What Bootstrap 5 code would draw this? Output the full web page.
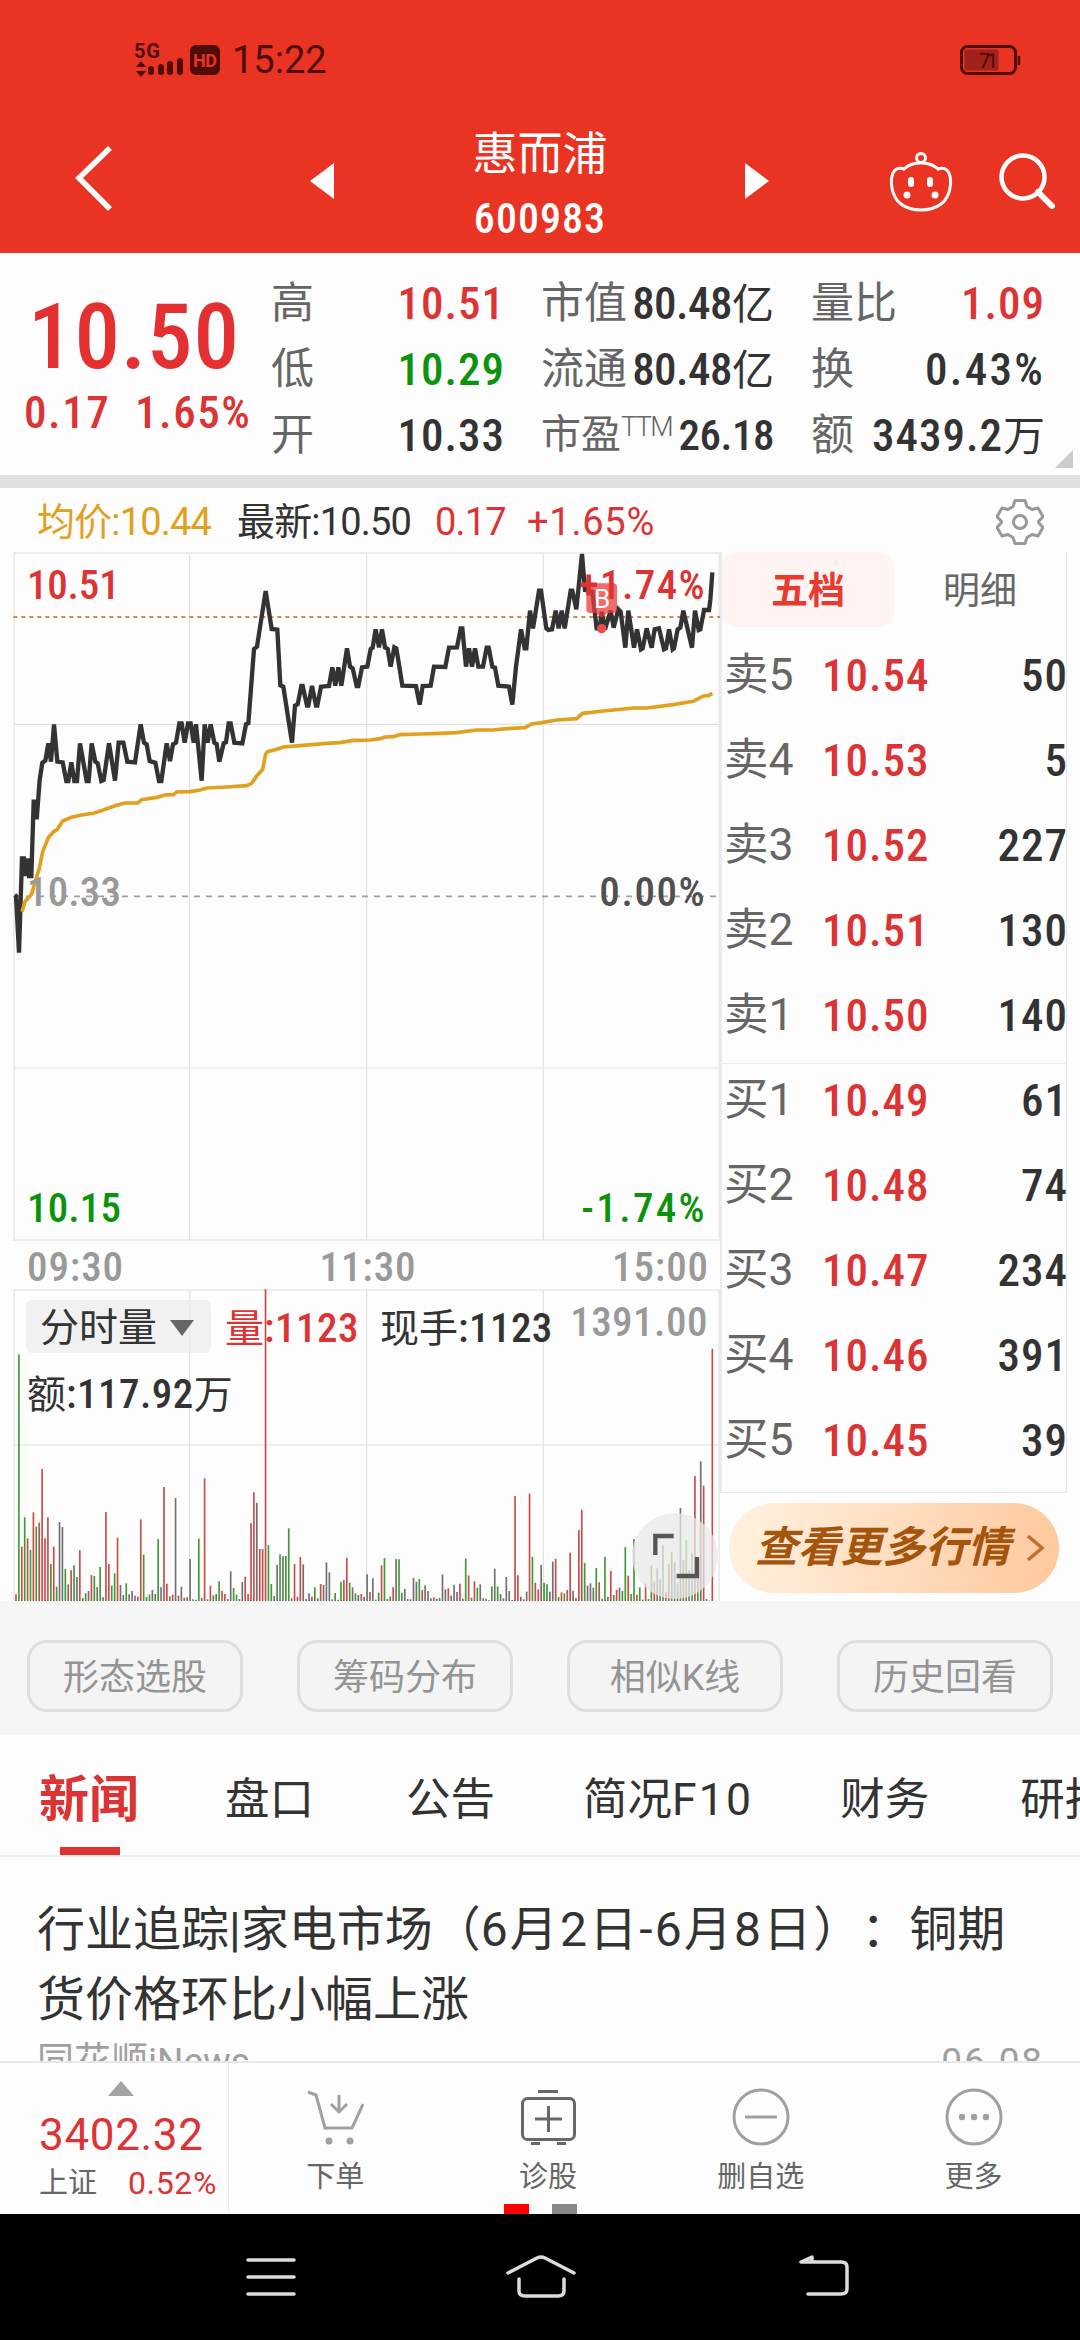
<!DOCTYPE html>
<html lang="zh-CN">
<head>
<meta charset="utf-8">
<meta name="viewport" content="width=device-width, initial-scale=1">
<title>惠而浦 600983</title>
<link href="https://cdn.jsdelivr.net/npm/bootstrap@5.3.0/dist/css/bootstrap.min.css" rel="stylesheet">
<style>
:root{--up:#dc3434;--down:#0b940b;--ink:#333;--dim:#666;--pale:#999}
body{width:1080px;height:2340px;overflow:hidden;background:#fdfdfd;color:var(--ink);font-family:Roboto,"Noto Sans CJK SC",sans-serif;line-height:1;text-spacing-trim:space-all}
svg{display:block;flex:none}
.up{color:var(--up)}.down{color:var(--down)}.dim{color:var(--dim)}.pale{color:var(--pale)}
.num{font-weight:500;font-stretch:85%;letter-spacing:.022em}
.statusbar{height:120px;padding:0 59px 0 134px;color:#4f0c08}
.clock{font-size:38px;margin-left:10px}
.topbar{height:133px}
.appname{font-size:45px;line-height:50px}
.appcode{font-size:42px;line-height:44px;font-weight:500;font-stretch:85%;letter-spacing:.025em}
.quote{height:222px}
.lastbox{width:271px;padding-top:45px}
.last{font-size:91px;line-height:78px;font-weight:500;font-stretch:85%;letter-spacing:.01em;margin-left:28px;color:#e43030}
.delta{font-size:45px;line-height:50px;margin:12px 0 0 24px}
.delta.num{letter-spacing:.035em}
.qcol{padding-top:17px}
.qrow{height:66px;font-size:43px;white-space:nowrap}
.qrow .num{font-size:45px;margin-right:-2px}
.qrow .num.tight{letter-spacing:-.012em;margin-right:0}
.qrow sup{font-size:27px;font-weight:300;top:-.45em;letter-spacing:-.06em}
.band{height:13px;background:#e0e0e0}
.avgline{height:62px;font-size:38px;padding:6px 36px 0 37px;letter-spacing:-.022em}
.leftcol{width:720px}
.times{height:46px;padding:6px 11px 0 27px;font-size:41px;width:720px;color:#999}
.volume{height:314px}
.legend{top:0;left:0;width:720px;padding:13px 12px 0 26px;font-size:41px}
.chip{width:185px;height:53px;border-radius:6px;background:rgba(235,235,235,.7);font-size:39px;padding:4px 0 0 14px}
.legend .num{letter-spacing:.012em}
.legend .num:not(.pale){padding-top:3px}
.cn{font-size:39px;font-weight:400;letter-spacing:0}
.qrow .cn{font-size:42px}
.book{width:347px;height:941px;border:1px solid #e8e8e8;border-left:2px solid #ebebeb;border-top:0}
.booktab{height:75px;width:173px;font-size:37px;border-radius:14px;color:var(--dim);padding-top:4px}
.booktab.on{background:#fff4f2;color:#e83a30;font-weight:700}
.lv{height:85px;padding-left:2px;font-size:44.5px}
.lv .num{font-size:45px;margin-right:-2px}
.lv .px{width:150px}
.lv .lb{width:98px}
#buy{margin-top:5px;border-top:1px solid #ececec}
#buy .lv:first-child{height:79px;padding-bottom:6px}
.more{width:330px;height:90px;border-radius:45px;margin:10px 0 0 9px;background:linear-gradient(100deg,#fff2e0,#ffdfc3 45%,#ffc89c);color:#a5540b;font-size:42.5px;font-weight:700;font-style:italic;padding-left:26px}
.tools{height:134px;background:#f6f6f6;padding:15px 27px 0}
.tool{width:216px;height:72px;border:3px solid #dedede;border-radius:20px;background:#f4f4f4;color:#949494;font-size:36px;padding-top:4px}
.tabs{height:122px;border-bottom:2px solid #ececec;font-size:44.5px;padding-left:39px;white-space:nowrap}
.tabs>div{height:120px;padding-top:10px}
.tabs .on{font-size:50px;font-weight:700;width:99px}
.tabs .on::after{content:"";position:absolute;left:21px;bottom:0;width:60px;height:8px;background:#e23030}
.news{height:204px;overflow:hidden;padding:38px 38px 0 37px}
.headline{font-size:48px;line-height:70px}
.meta{font-size:37px;line-height:40px;margin-top:7px;color:#a0a0a0}
.dock{height:153px;border-top:2px solid #e8e8e8}
.index{width:229px;border-right:1px solid #eee}
.act{width:213px;font-size:29px;color:var(--dim);padding-top:25px}
.pager{left:504px;bottom:0;gap:23px}
.pager i{width:25px;height:10px;background:#888}
.pager i:first-child{background:#f00}
.sysnav{height:126px;background:#000}
</style>
<script src="https://cdn.jsdelivr.net/npm/bootstrap@5.3.0/dist/js/bootstrap.bundle.min.js"></script>
</head>
<body>
<header style="background:#e93423">
  <div class="statusbar d-flex align-items-center justify-content-between">
    <div class="d-flex align-items-center">
      <svg width="88" height="36" viewBox="134 42 88 36" fill="#4f0c08">
        <text x="134" y="58" font-size="20" font-weight="700" textLength="26">5G</text>
        <path d="M136 67l5-6 5 6zM136 71l5 6 5-6z"/>
        <rect x="148" y="66" width="6" height="9" rx="3"/><rect x="158" y="64" width="6" height="11" rx="3"/><rect x="167" y="61" width="6" height="14" rx="3"/><rect x="177" y="58" width="6" height="17" rx="3"/>
        <rect x="190" y="45" width="30" height="30" rx="6"/>
        <text x="193" y="67" font-size="18" font-weight="700" textLength="24" fill="#e93423">HD</text>
      </svg>
      <span class="clock">15:22</span>
    </div>
    <svg width="62" height="32" viewBox="959 44 62 32" fill="none" stroke="#4f0c08">
      <rect x="961.500" y="46.500" width="54" height="27" rx="6" stroke-width="3"/>
      <rect x="964.500" y="49.500" width="34" height="21" rx="2" fill="#a0221a" stroke="none"/>
      <path d="M1019 56v9" stroke-width="2.500"/>
      <text x="979" y="68" font-size="20" stroke="none" fill="#4f0c08" textLength="19">71</text>
    </svg>
  </div>
  <div class="topbar d-flex text-white">
    <svg width="400" height="133" viewBox="0 120 400 133"><path d="M110 148L79 178l31 31" fill="none" stroke="#fff" stroke-width="5.500"/><path d="M310 181l24-18v36z" fill="#fff"/></svg>
    <div class="flex-fill text-center d-flex flex-column align-items-center" style="padding-top:10px">
      <div class="appname">惠而浦</div>
      <div class="appcode" style="margin-top:17px">600983</div>
    </div>
    <svg width="400" height="133" viewBox="680 120 400 133" fill="none" stroke="#fff" stroke-width="3">
      <path d="M769 181l-24-18v36z" fill="#fff" stroke="none"/>
      <circle cx="921" cy="158" r="4.500"/>
      <path d="M904 169c4-4 9-6 17-6s13 2 17 6c5-2 9 0 11 4 2 5 2 10 1 15-2 14-13 22-29 22s-27-8-29-22c-1-5-1-10 1-15 2-4 6-6 11-4z"/>
      <g fill="#fff" stroke="none"><rect x="908" y="177" width="6" height="10" rx="3"/><rect x="927" y="177" width="6" height="10" rx="3"/><circle cx="907" cy="195" r="3.500"/><circle cx="935" cy="195" r="3.500"/></g>
      <circle cx="1023" cy="177" r="21.500" stroke-width="4.500"/><path d="M1038 192l14 14" stroke-width="6" stroke-linecap="round"/>
    </svg>
  </div>
</header>

<section class="quote d-flex position-relative">
  <div class="lastbox">
    <div class="last">10.50</div>
    <div class="delta num up d-flex"><span style="width:111px">0.17</span><span>1.65%</span></div>
  </div>
  <div class="qcol" style="width:232px">
    <div class="qrow d-flex align-items-center justify-content-between"><span class="dim">高</span><span class="num up">10.51</span></div>
    <div class="qrow d-flex align-items-center justify-content-between"><span class="dim">低</span><span class="num down">10.29</span></div>
    <div class="qrow d-flex align-items-center justify-content-between"><span class="dim">开</span><span class="num">10.33</span></div>
  </div>
  <div class="qcol" style="width:233px;margin-left:38px">
    <div class="qrow d-flex align-items-center justify-content-between"><span class="dim">市值</span><span class="num tight">80.48<span class="cn">亿</span></span></div>
    <div class="qrow d-flex align-items-center justify-content-between"><span class="dim">流通</span><span class="num tight">80.48<span class="cn">亿</span></span></div>
    <div class="qrow d-flex align-items-center justify-content-between"><span class="dim" style="font-size:40px">市盈<sup>TTM</sup></span><span class="num tight" style="font-size:43px">26.18</span></div>
  </div>
  <div class="qcol" style="width:232px;margin-left:37px">
    <div class="qrow d-flex align-items-center justify-content-between"><span class="dim">量比</span><span class="num up">1.09</span></div>
    <div class="qrow d-flex align-items-center justify-content-between"><span class="dim">换</span><span class="num" style="letter-spacing:.05em">0.43%</span></div>
    <div class="qrow d-flex align-items-center justify-content-between"><span class="dim">额</span><span class="num">3439.2<span class="cn">万</span></span></div>
  </div>
  <svg class="position-absolute" style="right:7px;bottom:7px" width="18" height="18"><path d="M18 0v18H0z" fill="#ccc"/></svg>
</section>
<div class="band"></div>
<div class="avgline d-flex align-items-center">
  <span style="width:200px;color:#e0a020">均价:10.44</span><span style="width:198px">最新:10.50</span><span class="up" style="width:92px">0.17</span><span class="up" style="letter-spacing:.02em">+1.65%</span>
  <svg class="ms-auto" width="48" height="48" viewBox="-24 -24 48 48" fill="none" stroke="#999" stroke-width="3" stroke-linejoin="round"><path d="M-5-21.500h10l2 6 5 3 6-1.500 5 8.500-4.500 5 0 1 4.500 5-5 8.500-6-1.500-5 3-2 6h-10l-2-6-5-3-6 1.500-5-8.500 4.500-5 0-1-4.500-5 5-8.500 6 1.500 5-3z"/><circle r="6.500"/></svg>
</div>

<main class="d-flex" style="height:1051px">
  <div class="leftcol">
    <svg width="720" height="691" viewBox="0 30 2160 2073" fill="none">
      <rect x="42" y="39" width="2116" height="2061" stroke="#e9e9e9" stroke-width="5"/>
      <path d="M569 39V2100M1100 39V2100M1630 39V2100M42 553H2158M42 1584H2158" stroke="#e2e2e2" stroke-width="3.500"/>
      <path d="M42 1069H2158" stroke="#a0a0a0" stroke-width="5" stroke-dasharray="18 18"/>
      <path d="M40 231H2160" stroke="#d08a4c" stroke-width="6" stroke-dasharray="12 12"/>
      <polyline stroke="#333" stroke-width="13" points="44,1065 48,1068 57,1238 66,955 72,955 77,1008 83,955 87,1008 94,1008 101,785 104,785 110,838 119,720 127,668 136,662 145,610 153,665 162,553 172,665 188,667 199,723 205,723 214,667 223,723 231,723 240,610 260,723 266,723 275,610 286,665 293,670 304,723 311,720 327,610 345,722 356,608 370,608 382,665 405,667 422,553 432,608 440,613 449,663 466,668 477,723 484,723 500,610 510,663 519,613 528,608 538,550 545,550 554,608 564,550 572,550 581,608 588,553 605,722 614,553 623,608 632,553 643,608 650,612 658,665 671,610 678,607 686,550 692,550 703,608 727,610 738,553 745,550 762,327 771,320 797,153 815,267 832,269 841,436 850,440 876,608 885,497 893,493 904,438 908,438 921,497 925,497 936,438 948,497 952,497 963,440 987,438 997,382 1006,437 1015,382 1024,437 1041,325 1050,380 1058,385 1070,438 1075,438 1086,382 1102,380 1112,327 1118,323 1127,268 1137,322 1146,268 1155,322 1163,327 1172,380 1183,322 1189,325 1198,380 1207,437 1248,438 1259,494 1268,438 1292,437 1302,380 1336,381 1347,323 1371,322 1382,265 1387,265 1398,380 1407,325 1416,380 1425,325 1435,380 1449,380 1460,323 1466,323 1477,380 1485,383 1495,437 1527,440 1537,494 1548,380 1563,268 1574,325 1579,325 1590,212 1599,265 1617,152 1623,152 1639,265 1645,270 1656,268 1667,212 1676,265 1685,212 1694,265 1712,152 1717,152 1729,208 1746,42 1755,150 1777,155 1790,265 1799,265 1805,215 1815,268 1832,212 1841,263 1855,208 1862,215 1876,323 1885,212 1902,323 1911,268 1923,328 1928,325 1940,265 1955,323 1964,268 1977,265 1992,328 1998,325 2007,268 2018,328 2022,325 2033,268 2041,263 2050,212 2076,323 2085,212 2096,270 2101,268 2112,210 2127,210 2131,180 2137,97"/>
      <polyline stroke="#e0a020" stroke-width="11" points="66,1115 75,1085 95,1062 104,1030 118,985 128,935 145,893 160,876 172,868 188,843 215,832 245,825 280,820 310,810 345,797 375,789 413,789 425,779 470,772 495,765 520,764 530,756 570,755 600,750 620,744 680,741 740,737 755,730 770,708 788,688 797,642 803,635 830,628 850,621 900,617 980,610 1020,608 1060,601 1110,600 1140,596 1155,591 1180,590 1200,584 1260,582 1320,580 1370,578 1430,570 1480,570 1520,566 1575,563 1595,552 1625,548 1670,540 1730,536 1748,520 1810,513 1900,504 1940,504 2020,494 2080,484 2110,468 2125,467 2137,460"/>
      <path d="M1770 130h70a11 11 0 0 1 11 11v67a11 11 0 0 1-11 11h-18l-17 14-17-14h-18a11 11 0 0 1-11-11v-67a11 11 0 0 1 11-11z" fill="#ee3a3a" opacity=".75"/>
      <circle cx="1805" cy="266" r="14" fill="#ee4a4a"/>
      <g class="num" style="letter-spacing:0" font-size="123">
        <text x="81" y="177" textLength="278" fill="#dc3434">10.51</text>
        <text x="81" y="1097" textLength="282" fill="#999">10.33</text>
        <text x="81" y="2046" textLength="282" fill="#0b940b">10.15</text>
        <text x="1736" y="177" textLength="378" fill="#dc3434">+1.74%</text>
        <text x="1798" y="1097" textLength="316" fill="#505050">0.00%</text>
        <text x="1744" y="2046" textLength="370" fill="#0b940b">-1.74%</text>
      </g>
      <text x="1782" y="204" font-size="78" fill="#fff">B</text>
    </svg>
    <div class="times num d-flex align-items-center justify-content-between"><span>09:30</span><span>11:30</span><span>15:00</span></div>
    <div class="volume position-relative">
      <svg width="720" height="314" viewBox="0 321 2160 942" fill="none">
        <path d="M42 1263V330H2158V1263M42 795H2158" stroke="#e9e9e9" stroke-width="5"/>
        <path d="M569 330V1263M1100 330V1263M1630 330V1263" stroke="#e2e2e2" stroke-width="3.500"/>
        <g id="bars" stroke-width="5"></g>
        <circle cx="2025" cy="1128" r="129" fill="#e8e8e8" opacity=".75"/>
        <path d="M1966 1125V1068H2021M2091 1131V1188H2030" stroke="#555" stroke-width="13"/>
      </svg>
      <div class="legend position-absolute">
        <div class="d-flex align-items-center">
          <span class="chip d-flex align-items-center">分时量<svg width="26" height="17" style="margin:-2px 0 0 12px"><path d="M1 1h24L13 17z" fill="#666"/></svg></span>
          <span class="num up" style="margin-left:14px"><span class="cn">量</span>:1123</span>
          <span class="num" style="margin-left:21px"><span class="cn">现手</span>:1123</span>
          <span class="num pale ms-auto" style="margin-top:-9px">1391.00</span>
        </div>
        <div class="num" style="margin:18px 0 0 1px"><span class="cn">额</span>:117.92<span class="cn">万</span></div>
      </div>
    </div>
  </div>
  <div>
    <div class="book">
      <div class="d-flex" style="margin:2px 0 6px"><div class="booktab on d-flex align-items-center justify-content-center">五档</div><div class="booktab d-flex align-items-center justify-content-center">明细</div></div>
      <div id="sell"></div>
      <div id="buy"></div>
    </div>
    <div class="more d-flex align-items-center">查看更多行情<svg width="20" height="28" viewBox="0 0 20 28" style="margin-left:16px"><path d="M2 2l14 12L2 26" fill="none" stroke="#c0702c" stroke-width="3.500"/></svg></div>
  </div>
</main>

<div class="tools d-flex align-items-center justify-content-between">
  <div class="tool d-flex align-items-center justify-content-center">形态选股</div>
  <div class="tool d-flex align-items-center justify-content-center">筹码分布</div>
  <div class="tool d-flex align-items-center justify-content-center">相似K线</div>
  <div class="tool d-flex align-items-center justify-content-center">历史回看</div>
</div>
<nav class="tabs d-flex overflow-hidden">
  <div class="on up d-flex align-items-center position-relative">新闻</div>
  <div class="d-flex align-items-center" style="margin-left:87px">盘口</div>
  <div class="d-flex align-items-center" style="margin-left:92px">公告</div>
  <div class="d-flex align-items-center" style="margin-left:88px">简况<span style="letter-spacing:.05em">F10</span></div>
  <div class="d-flex align-items-center" style="margin-left:87px">财务</div>
  <div class="d-flex align-items-center" style="margin-left:91px">研报</div>
</nav>
<article class="news">
  <div class="headline">行业追踪|家电市场（<span style="letter-spacing:.045em">6月2日-6月8日</span>）：铜期<br>货价格环比小幅上涨</div>
  <div class="meta d-flex justify-content-between"><span>同花顺iNews</span><span style="letter-spacing:.05em;margin-right:-2px">06-08</span></div>
</article>
<footer class="dock d-flex position-relative">
  <div class="index">
    <svg width="26" height="15" style="margin:18px 0 0 108px"><path d="M13 0l13 15H0z" fill="#a3a3a3"/></svg>
    <div class="up" style="font-size:44px;margin:17px 0 0 39px;letter-spacing:.015em">3402.32</div>
    <div class="d-flex align-items-center" style="font-size:29px;margin:10px 0 0 39px"><span class="dim" style="width:89px">上证</span><span class="up" style="font-size:32px;letter-spacing:.02em">0.52%</span></div>
  </div>
  <div class="act d-flex flex-column align-items-center">
    <svg width="58" height="58" viewBox="305 2087 58 58" fill="none" stroke="#a0a0a0" stroke-width="3"><path d="M307 2091l8 3 9 33h27l11-24M338 2094v16M330 2103l8 8 8-8"/><g fill="#a0a0a0" stroke="none"><circle cx="328" cy="2140" r="3.500"/><circle cx="349" cy="2140" r="3.500"/></g></svg>
    <span style="margin-top:17px">下单</span>
  </div>
  <div class="act d-flex flex-column align-items-center">
    <svg width="58" height="58" viewBox="518 2087 58 58" fill="none" stroke="#686868" stroke-width="3"><rect x="521.500" y="2097.500" width="52" height="41" rx="5"/><path d="M537 2090.500h20M530 2142.500h9M556 2142.500h9M547.500 2105v26M534 2118h27"/></svg>
    <span style="margin-top:17px">诊股</span>
  </div>
  <div class="act d-flex flex-column align-items-center">
    <svg width="58" height="58" viewBox="-29 -29 58 58" fill="none" stroke="#a0a0a0" stroke-width="3"><circle r="27"/><path d="M-16 0h32"/></svg>
    <span style="margin-top:17px">删自选</span>
  </div>
  <div class="act d-flex flex-column align-items-center">
    <svg width="58" height="58" viewBox="-29 -29 58 58" fill="#a0a0a0"><circle r="27" fill="none" stroke="#a0a0a0" stroke-width="3"/><circle cx="-12" r="3.200"/><circle r="3.200"/><circle cx="12" r="3.200"/></svg>
    <span style="margin-top:17px">更多</span>
  </div>
  <div class="pager position-absolute d-flex"><i></i><i></i></div>
</footer>
<div class="sysnav">
  <svg width="1080" height="126" viewBox="0 2214 1080 126" fill="none" stroke="#dcdcdc" stroke-width="3.500" stroke-linecap="round" stroke-linejoin="round">
    <path d="M248 2260h46M248 2277h46M248 2294h46"/>
    <path d="M508 2273l29-15q4-2 8 0l29 15M519 2279v12q0 5 6 5h33q6 0 6-5v-12"/>
    <path d="M808 2294h33q6 0 6-5v-22q0-5-6-5h-40M812 2257l-11 5h11z" />
  </svg>
</div>

<script>
const level = ([label, price, qty]) => `<div class="lv d-flex align-items-center"><span class="lb dim">${label}</span><span class="px num up">${price}</span><span class="num ms-auto">${qty}</span></div>`;
document.getElementById('sell').innerHTML = [['卖5','10.54',50],['卖4','10.53',5],['卖3','10.52',227],['卖2','10.51',130],['卖1','10.50',140]].map(level).join('');
document.getElementById('buy').innerHTML = [['买1','10.49',61],['买2','10.48',74],['买3','10.47',234],['买4','10.46',391],['买5','10.45',39]].map(level).join('');

// One token per minute: bar top on the panel's scale, then r = up, g = down, k = flat.
const minutes = `1243r 523g 1100r 1012g 1075r 1110g 997r 1040g 1028r 867r 1075r 1012r 1152g 1100r 1220g 1026k 1041k 1167g 1213k 1171r 1156g 1191k 1111r 1254g 1240g 1233k 1185r 1188g 1221k 1161g 1252k 996r 1152r 1217g 1180g 1073r 1215k 1245k 1210g 1243k 1233k 1247k 1250r 1018r 1124g 1251g 1243g 1230k 1242k 1077g 1222k 921r 1211r 1249g 1244r 954k 1247r 1220k 1253g 1252r 1137k 1258g 1259k 1076g 1254k 895r 1258k 1217r 1246g 1242k 1204g 1233r 1242r 1257k 1174k 1224g 1244g 1257k 1206k 1190r 1242r 1030r 937r 968k 1107r 1107r 327r 1095g 1212g 1248k 1155k 1123g 1129k 1128g 1045g 1255k 1152r 1250r 1131r 1153k 1257k 1240k 1250r 1222g 1255k 1212r 1215k 1147k 1177k 1258r 1239g 1259k 1205g 1200r 1133r 1208g 1222k 1240g 1245k 1242r 1250k 1183k
1236r 1195k 1259k 1238g 1156r 1134g 1257k 1249g 1222r 1137k 1138g 1238g 1227k 1257k 1258k 1194k 1205k 1197g 1230r 1216k 1233k 1255k 1252r 1256k 1254g 1183k 1228k 1225r 1247k 1214k 1236k 1211r 1256k 1135g 1186r 1253g 1204r 1223g 1213k 1255k 1256r 1261k 1219g 1166k 1219g 1242k 1255k 1191k 1233k 1260k 948r 1186r 1250r 1258k 1235k 941r 1130g 1208r 1228r 1155k 1208g 1213g 1235k 1145k 1136r 1251g 1237r 1240g 1230r 1118r 1232k 1254g 1050r 989r 1149g 1217k 1210k 1223k 1164g 1207r 1256k 1130g 1250k 1173r 1245g 1230r 1223k 1233g 1101g 1187r 1242g 1077g 1244r 1222g 1259k 1210r 1257k 1157g 1205r 1165k 1198k 1094g 1235r 1152r 1116g 1147k 1210g 984k 1140r 1080g 1170k 1120g 888r 1165g 844k 917r 1257k 1262k 507r`.split(/\s+/);
const ink = {r: '#cc4a4a', g: '#3f9a35', k: '#707070'};
const step = (2137 - 48) / (minutes.length - 1);
document.getElementById('bars').innerHTML = minutes.map((m, i) =>
  `<path stroke="${ink[m.slice(-1)]}" d="M${(48 + i * step).toFixed(1)} 1263V${parseInt(m)}"/>`).join('');
</script>
</body>
</html>
